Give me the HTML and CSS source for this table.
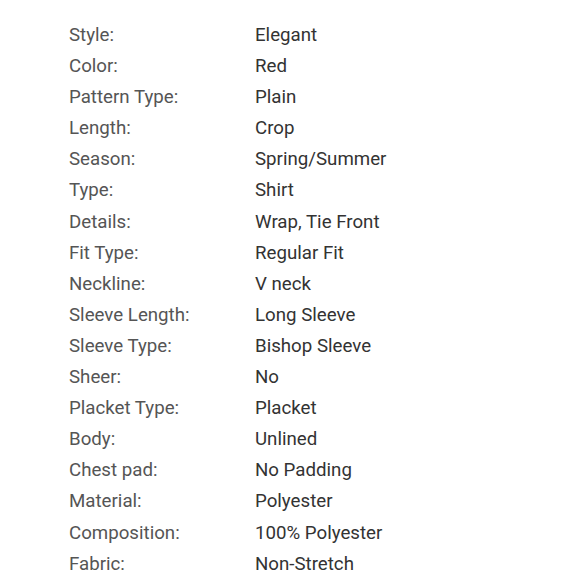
FILE: index.html
```html
<!DOCTYPE html>
<html>
<head>
<meta charset="utf-8">
<link rel="stylesheet" href="styles.css">
</head>
<body>
<div class="specs">
  <div class="row"><span class="label">Style:</span><span class="value">Elegant</span></div>
  <div class="row"><span class="label">Color:</span><span class="value">Red</span></div>
  <div class="row"><span class="label">Pattern Type:</span><span class="value">Plain</span></div>
  <div class="row"><span class="label">Length:</span><span class="value">Crop</span></div>
  <div class="row"><span class="label">Season:</span><span class="value">Spring/Summer</span></div>
  <div class="row"><span class="label">Type:</span><span class="value">Shirt</span></div>
  <div class="row"><span class="label">Details:</span><span class="value">Wrap, Tie Front</span></div>
  <div class="row"><span class="label">Fit Type:</span><span class="value">Regular Fit</span></div>
  <div class="row"><span class="label">Neckline:</span><span class="value">V neck</span></div>
  <div class="row"><span class="label">Sleeve Length:</span><span class="value">Long Sleeve</span></div>
  <div class="row"><span class="label">Sleeve Type:</span><span class="value">Bishop Sleeve</span></div>
  <div class="row"><span class="label">Sheer:</span><span class="value">No</span></div>
  <div class="row"><span class="label">Placket Type:</span><span class="value">Placket</span></div>
  <div class="row"><span class="label">Body:</span><span class="value">Unlined</span></div>
  <div class="row"><span class="label">Chest pad:</span><span class="value">No Padding</span></div>
  <div class="row"><span class="label">Material:</span><span class="value">Polyester</span></div>
  <div class="row"><span class="label">Composition:</span><span class="value">100% Polyester</span></div>
  <div class="row"><span class="label">Fabric:</span><span class="value">Non-Stretch</span></div>
</div>
</body>
</html>
```
FILE: styles.css
```css
html, body {
  margin: 0;
  padding: 0;
  background: #fff;
}
body {
  font-family: Roboto, "Liberation Sans", sans-serif;
  font-size: 18.7px;
}
.specs {
  display: flex;
  flex-direction: column;
  padding: 20px 0 0 69px;
}
.row {
  display: grid;
  grid-template-columns: 186px auto;
  line-height: 31px;
  height: 31.1px;
}
.label {
  color: #555;
}
.value {
  color: #333;
}
```
